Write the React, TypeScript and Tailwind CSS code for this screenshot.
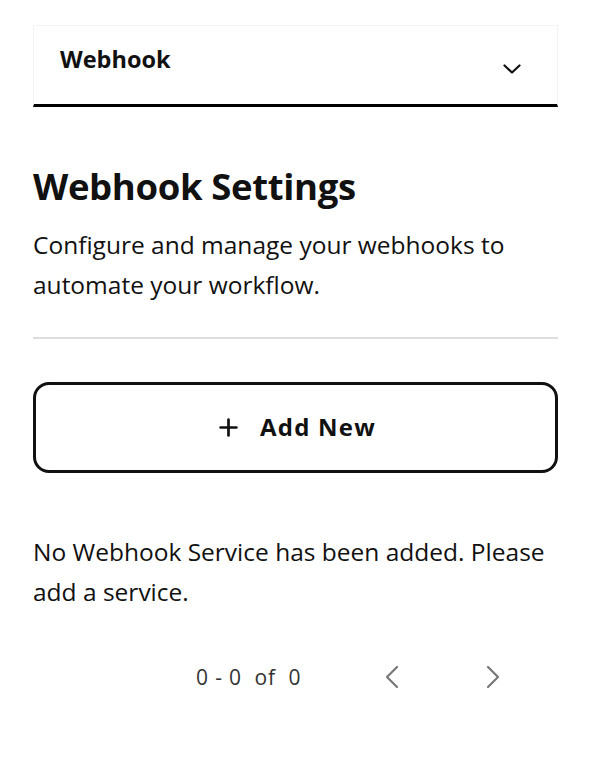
import { Plus } from "lucide-react";

function Chevron({ dir, className }: { dir: "left" | "right"; className?: string }) {
  return (
    <svg viewBox="0 0 14 24" className={className} fill="none" stroke="currentColor" strokeWidth={2.2} strokeLinecap="round" strokeLinejoin="round">
      {dir === "left" ? <polyline points="12,2 2,12 12,22" /> : <polyline points="2,2 12,12 2,22" />}
    </svg>
  );
}

export default function App() {
  return (
    <main className="min-h-screen bg-white px-[33px] pt-[25px] text-[#111] [font-family:'Open_Sans','Noto_Sans',sans-serif]">
      <div className="flex h-[82px] items-center justify-between border border-b-[3px] border-[#f3f3f3] border-b-black pl-[26px] pr-[36px]">
        <span className="pb-[10px] text-[23.5px] font-bold leading-none">Webhook</span>
        <svg viewBox="0 0 18 10" className="mt-[8px] h-[10px] w-[18px]" fill="none" stroke="currentColor" strokeWidth={2.2} strokeLinecap="round" strokeLinejoin="round">
          <polyline points="1.5,1.5 9,8.5 16.5,1.5" />
        </svg>
      </div>

      <section className="pt-[61px]">
        <h1 className="text-[36.5px] font-bold leading-none tracking-[-0.01em]">Webhook Settings</h1>
        <p className="mt-[20px] text-[24.5px] leading-[40px]">
          Configure and manage your webhooks to automate your workflow.
        </p>
      </section>

      <hr className="mt-[32px] border-t-2 border-[#ddd]" />

      <button className="mt-[43px] flex h-[91px] w-full items-center justify-center gap-[18px] rounded-[16px] border-[3px] border-[#111] text-[24px] font-bold tracking-[0.05em]">
        <Plus className="h-[27px] w-[27px]" strokeWidth={2.4} />
        Add New
      </button>

      <p className="mt-[59px] text-[24.5px] leading-[40px]">
        No Webhook Service has been added. Please add a service.
      </p>

      <div className="mt-[50px] flex items-center pl-[163px] text-[21px] text-[#333]">
        <span className="tracking-[0.04em]">0 - 0&nbsp; of&nbsp; 0</span>
        <Chevron dir="left" className="ml-[84px] h-[24px] w-[14px] text-[#777]" />
        <Chevron dir="right" className="ml-[87px] h-[24px] w-[14px] text-[#777]" />
      </div>
    </main>
  );
}
